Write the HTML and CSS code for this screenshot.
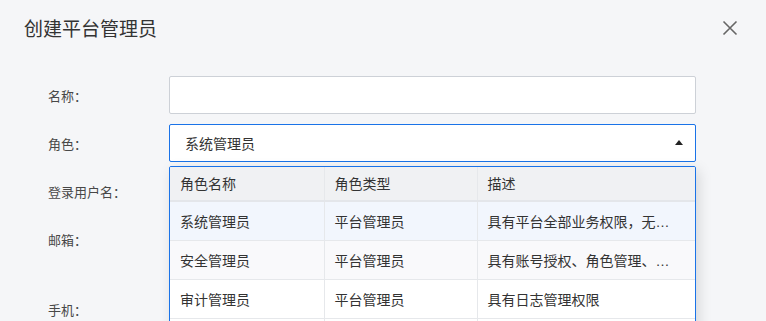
FILE: index.html
```html
<!DOCTYPE html>
<html lang="zh-CN">
<head>
    <meta charset="UTF-8">
    <title>创建平台管理员</title>
    <link rel="stylesheet" href="styles.css">
</head>
<body>
    <div class="dialog">
        <div class="dialog-header">
            <h2>创建平台管理员</h2>
            <button class="close-btn" aria-label="关闭">
                <svg width="16" height="16" viewBox="0 0 16 16"><path d="M1.5 1.5L14.5 14.5M14.5 1.5L1.5 14.5" stroke="#666" stroke-width="1.6" fill="none"/></svg>
            </button>
        </div>

        <div class="form">
            <div class="form-row">
                <label>名称：</label>
                <input type="text" class="field">
            </div>
            <div class="form-row">
                <label>角色：</label>
                <div class="select-wrap">
                    <div class="field select active">
                        <span>系统管理员</span>
                        <span class="arrow"></span>
                    </div>
                    <!-- 角色下拉表格 -->
                    <div class="dropdown">
                        <table>
                            <colgroup>
                                <col style="width: 154px">
                                <col style="width: 153px">
                                <col>
                            </colgroup>
                            <thead>
                                <tr><th>角色名称</th><th>角色类型</th><th>描述</th></tr>
                            </thead>
                            <tbody>
                                <tr class="hover"><td>系统管理员</td><td>平台管理员</td><td>具有平台全部业务权限，无系统管理权限</td></tr>
                                <tr class="selected"><td>安全管理员</td><td>平台管理员</td><td>具有账号授权、角色管理、安全审计权限</td></tr>
                                <tr><td>审计管理员</td><td>平台管理员</td><td>具有日志管理权限</td></tr>
                                <tr><td>运维管理员</td><td>平台管理员</td><td>具有运维管理权限</td></tr>
                            </tbody>
                        </table>
                    </div>
                </div>
            </div>
            <div class="form-row">
                <label>登录用户名：</label>
                <input type="text" class="field">
            </div>
            <div class="form-row email-row">
                <label>邮箱：</label>
                <input type="text" class="field">
            </div>
            <div class="form-row">
                <label>手机：</label>
                <input type="text" class="field">
            </div>
        </div>
    </div>
</body>
</html>
```

FILE: styles.css
```css
* {
    box-sizing: border-box;
    margin: 0;
    padding: 0;
    font-family: 'Noto Sans CJK SC', 'Noto Sans', sans-serif;
}
body {
    background: #f5f6f8;
    color: #333;
    overflow: hidden;
}
.dialog {
    width: 766px;
}
.dialog-header {
    display: flex;
    align-items: center;
    justify-content: space-between;
    padding: 14px 28px 0 24px;
    height: 42px;
}
.dialog-header h2 {
    font-size: 19px;
    font-weight: 400;
    color: #333;
    line-height: 28px;
}
.close-btn {
    background: none;
    border: none;
    width: 16px;
    height: 16px;
    display: flex;
    cursor: pointer;
}
.form {
    padding: 34px 70px 0 48px;
}
.form-row {
    display: flex;
    align-items: center;
    margin-bottom: 10px;
}
.form-row label {
    width: 121px;
    font-size: 13px;
    color: #484848;
    padding-top: 1px;
}
.email-row {
    margin-bottom: 32px;
}
.field {
    flex: 1;
    height: 38px;
    border: 1px solid #cdd1d7;
    border-radius: 2px;
    background: #fff;
    font-size: 14px;
    outline: none;
}
.select-wrap {
    flex: 1;
    position: relative;
}
.select {
    display: flex;
    align-items: center;
    justify-content: space-between;
    padding: 0 12px 0 15px;
    color: #333;
}
.select.active {
    border-color: #1a73e8;
}
.arrow {
    width: 0;
    height: 0;
    border-left: 4px solid transparent;
    border-right: 4px solid transparent;
    border-bottom: 5px solid #222;
    margin-top: -2px;
}
.dropdown {
    position: absolute;
    top: 42px;
    left: 0;
    right: 0;
    z-index: 10;
    background: #fff;
    border: 1px solid #1a73e8;
    border-radius: 2px;
    box-shadow: 3px 4px 14px rgba(0, 0, 0, 0.13);
    overflow: hidden;
}
.dropdown table {
    width: 100%;
    border-collapse: collapse;
    table-layout: fixed;
    font-size: 14px;
    color: #333;
}
.dropdown th,
.dropdown td {
    font-family: 'Liberation Sans', 'Noto Sans CJK SC', sans-serif;
    text-align: left;
    font-weight: 400;
    padding: 0 10px;
    white-space: nowrap;
    overflow: hidden;
    text-overflow: ellipsis;
    border-left: 1px solid #e6e8eb;
    border-bottom: 1px solid #e6e8eb;
}
.dropdown th:first-child,
.dropdown td:first-child {
    border-left: none;
}
.dropdown th {
    height: 34px;
    background: #f0f1f3;
    border-bottom: 2px solid #e4e6ea;
    padding-bottom: 2px;
}
.dropdown td {
    height: 39px;
}
.dropdown td:last-child,
.dropdown th:last-child {
    padding-left: 10px;
    padding-right: 22px;
}
.dropdown tr.hover td {
    background: #f2f6fd;
}
.dropdown tr.selected td {
    background: #f9f9fb;
}
```
